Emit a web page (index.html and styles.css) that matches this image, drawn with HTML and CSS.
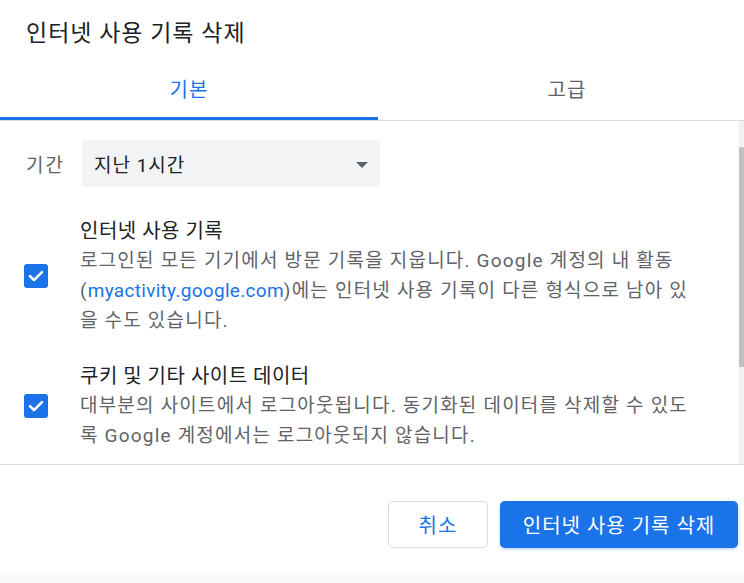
FILE: index.html
```html
<!DOCTYPE html>
<html lang="ko">
<head>
<meta charset="utf-8">
<title>인터넷 사용 기록 삭제</title>
<link rel="stylesheet" href="styles.css">
</head>
<body>
<div class="dialog">
  <div class="header">인터넷 사용 기록 삭제</div>
  <div class="tabs">
    <div class="tab active">기본</div>
    <div class="tab">고급</div>
  </div>
  <div class="scroll-wrap">
    <div class="scroll">
      <div class="period">
        <span class="period-label">기간</span>
        <div class="select">
          <span>지난 1시간</span>
          <span class="arrow"></span>
        </div>
      </div>
      <div class="item">
        <svg class="check" viewBox="0 0 24 24" width="24" height="24"><rect x="0" y="0" width="24" height="24" rx="3" fill="#1a73e8"/><path d="M6 12.2l4 4 8-8" fill="none" stroke="#fff" stroke-width="2.6" stroke-linecap="round" stroke-linejoin="round"/></svg>
        <div class="item-text">
          <div class="item-title">인터넷 사용 기록</div>
          <div class="item-desc">로그인된 모든 기기에서 방문 기록을 지웁니다. Google 계정의 내 활동 (<a class="link" href="#">myactivity.google.com</a>)에는 인터넷 사용 기록이 다른 형식으로 남아 있을 수도 있습니다.</div>
        </div>
      </div>
      <div class="item">
        <svg class="check" viewBox="0 0 24 24" width="24" height="24"><rect x="0" y="0" width="24" height="24" rx="3" fill="#1a73e8"/><path d="M6 12.2l4 4 8-8" fill="none" stroke="#fff" stroke-width="2.6" stroke-linecap="round" stroke-linejoin="round"/></svg>
        <div class="item-text">
          <div class="item-title">쿠키 및 기타 사이트 데이터</div>
          <div class="item-desc">대부분의 사이트에서 로그아웃됩니다. 동기화된 데이터를 삭제할 수 있도록 Google 계정에서는 로그아웃되지 않습니다.</div>
        </div>
      </div>
    </div>
    <div class="scrollbar">
      <div class="thumb"></div>
    </div>
  </div>
  <div class="footer">
    <button class="btn btn-cancel">취소</button>
    <button class="btn btn-primary">인터넷 사용 기록 삭제</button>
  </div>
  <div class="band"></div>
</div>
</body>
</html>
```

FILE: styles.css
```css
html, body {
  margin: 0;
  padding: 0;
  overflow: hidden;
  background: #fff;
}

body {
  font-family: Roboto, "Noto Sans CJK KR", sans-serif;
  color: #202124;
}

.dialog {
  width: 756px;
  background: #fff;
}

.header {
  height: 60px;
  box-sizing: border-box;
  padding: 19px 0 0 26px;
  font-size: 23px;
  letter-spacing: 1px;
  line-height: 30px;
  color: #202124;
}

.tabs {
  display: grid;
  grid-template-columns: 1fr 1fr;
  border-bottom: 1px solid #dadce0;
}

.tab {
  height: 60px;
  box-sizing: border-box;
  display: flex;
  align-items: center;
  justify-content: center;
  font-size: 20px;
  letter-spacing: 1px;
  color: #5f6368;
  padding-bottom: 4px;
}

.tab.active {
  color: #1a73e8;
  border-bottom: 3px solid #1a73e8;
  padding-bottom: 1px;
}

.scroll-wrap {
  display: flex;
  height: 343px;
  border-bottom: 1px solid #dadce0;
}

.scroll {
  flex: 1;
  overflow: hidden;
}

.scrollbar {
  width: 17px;
  flex: none;
  background: #f1f1f1;
  padding-top: 26px;
  box-sizing: border-box;
}

.thumb {
  height: 220px;
  background: #c1c1c1;
}

.period {
  display: flex;
  align-items: center;
  padding: 19px 0 0 26px;
}

.period-label {
  width: 56px;
  font-size: 19px;
  letter-spacing: 2px;
  color: #5f6368;
}

.select {
  width: 298px;
  height: 47px;
  box-sizing: border-box;
  background: #f1f3f4;
  border-radius: 4px;
  display: flex;
  align-items: center;
  justify-content: space-between;
  padding: 0 12px 0 12px;
  font-size: 19px;
  letter-spacing: 1px;
  color: #202124;
}

.arrow {
  width: 0;
  height: 0;
  border-left: 6.5px solid transparent;
  border-right: 6.5px solid transparent;
  border-top: 6.5px solid #5f6368;
  margin-top: 2px;
}

.item {
  display: flex;
  align-items: center;
  gap: 32px;
  padding-left: 24px;
  margin-top: 25px;
}

.period + .item {
  margin-top: 29px;
}

.check {
  flex: none;
  display: block;
}

.item-text {
  width: 622px;
  line-height: 30px;
}

.item-title {
  font-size: 20px;
  letter-spacing: 0.5px;
  color: #202124;
}

.item-desc {
  font-size: 19px;
  letter-spacing: 1.2px;
  color: #5f6368;
}

.link {
  color: #1a73e8;
  text-decoration: none;
  letter-spacing: 0.3px;
}

.footer {
  display: flex;
  justify-content: flex-end;
  gap: 12px;
  padding: 36px 18px 25px 0;
}

.btn {
  height: 47px;
  box-sizing: border-box;
  border-radius: 5px;
  font-family: Roboto, "Noto Sans CJK KR", sans-serif;
  font-size: 20px;
  letter-spacing: 1px;
  cursor: pointer;
}

.btn-cancel {
  width: 100px;
  background: #fff;
  border: 1px solid #dadce0;
  color: #1a73e8;
}

.btn-primary {
  width: 238px;
  background: #1a73e8;
  border: none;
  color: #fff;
  box-shadow: 0 1px 3px rgba(26, 115, 232, 0.35);
}

.band {
  height: 10px;
  background: #f8f9fa;
}
```
